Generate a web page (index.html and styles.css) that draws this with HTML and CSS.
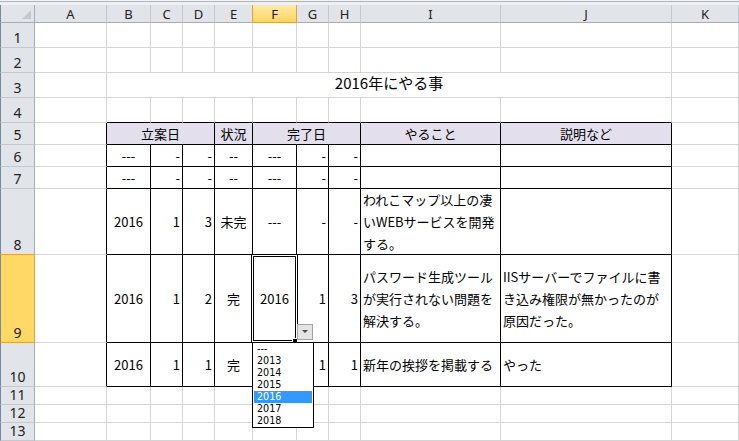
FILE: index.html
```html
<!DOCTYPE html>
<html lang="ja">
<head>
<meta charset="utf-8">
<title>2016年にやる事</title>
<link rel="stylesheet" href="styles.css">
</head>
<body>
<div class="page">
  <div class="strip"></div>
  <div class="sheet">
    <div class="corner"><span class="tri"></span></div>
    <div class="ch">A</div><div class="ch">B</div><div class="ch">C</div><div class="ch">D</div><div class="ch pre">E</div><div class="ch sel">F</div><div class="ch">G</div><div class="ch">H</div><div class="ch">I</div><div class="ch">J</div><div class="ch">K</div>

    <div class="rh">1</div><div class="c"></div><div class="c"></div><div class="c"></div><div class="c"></div><div class="c"></div><div class="c"></div><div class="c"></div><div class="c"></div><div class="c"></div><div class="c"></div><div class="c"></div>
    <div class="rh">2</div><div class="c"></div><div class="c"></div><div class="c"></div><div class="c"></div><div class="c"></div><div class="c"></div><div class="c"></div><div class="c"></div><div class="c"></div><div class="c"></div><div class="c"></div>
    <div class="rh">3</div><div class="c"></div><div class="c title span9">2016年にやる事</div><div class="c"></div>
    <div class="rh">4</div><div class="c"></div><div class="c bb"></div><div class="c bb"></div><div class="c bb"></div><div class="c bb"></div><div class="c bb"></div><div class="c bb"></div><div class="c bb"></div><div class="c bb"></div><div class="c bb"></div><div class="c"></div>

    <div class="rh">5</div><div class="c br"></div>
    <div class="c t hd m span3">立案日</div><div class="c t hd m">状況</div><div class="c t hd m span3">完了日</div><div class="c t hd m">やること</div><div class="c t hd m">説明など</div><div class="c"></div>

    <div class="rh">6</div><div class="c br"></div>
    <div class="c t m">---</div><div class="c t r">-</div><div class="c t r">-</div><div class="c t m">--</div><div class="c t m">---</div><div class="c t r">-</div><div class="c t r">-</div><div class="c t"></div><div class="c t"></div><div class="c"></div>

    <div class="rh">7</div><div class="c br"></div>
    <div class="c t m">---</div><div class="c t r">-</div><div class="c t r">-</div><div class="c t m">--</div><div class="c t m">---</div><div class="c t r">-</div><div class="c t r">-</div><div class="c t"></div><div class="c t"></div><div class="c"></div>

    <div class="rh pre">8</div><div class="c br"></div>
    <div class="c t m">2016</div><div class="c t r">1</div><div class="c t r">3</div><div class="c t m">未完</div><div class="c t m">---</div><div class="c t r">-</div><div class="c t r">-</div><div class="c t l">われこマップ以上の凄<br>いWEBサービスを開発<br>する。</div><div class="c t"></div><div class="c"></div>

    <div class="rh sel">9</div><div class="c br"></div>
    <div class="c t m">2016</div><div class="c t r">1</div><div class="c t r">2</div><div class="c t m">完</div><div class="c t m">2016</div><div class="c t r">1</div><div class="c t r">3</div><div class="c t l">パスワード生成ツール<br>が実行されない問題を<br>解決する。</div><div class="c t l">IISサーバーでファイルに書<br>き込み権限が無かったのが<br>原因だった。</div><div class="c"></div>

    <div class="rh">10</div><div class="c br"></div>
    <div class="c t m">2016</div><div class="c t r">1</div><div class="c t r">1</div><div class="c t m">完</div><div class="c t m"></div><div class="c t r">1</div><div class="c t r">1</div><div class="c t l">新年の挨拶を掲載する</div><div class="c t l">やった</div><div class="c"></div>

    <div class="rh">11</div><div class="c"></div><div class="c"></div><div class="c"></div><div class="c"></div><div class="c"></div><div class="c"></div><div class="c"></div><div class="c"></div><div class="c"></div><div class="c"></div><div class="c"></div>
    <div class="rh">12</div><div class="c"></div><div class="c"></div><div class="c"></div><div class="c"></div><div class="c"></div><div class="c"></div><div class="c"></div><div class="c"></div><div class="c"></div><div class="c"></div><div class="c"></div>
    <div class="rh">13</div><div class="c"></div><div class="c"></div><div class="c"></div><div class="c"></div><div class="c"></div><div class="c"></div><div class="c"></div><div class="c"></div><div class="c"></div><div class="c"></div><div class="c"></div>
  </div>

  <div class="selbox"></div>
  <div class="handle"></div>
  <div class="ddbtn"><svg width="16" height="16" viewBox="0 0 16 16"><polygon points="5,6 11,6 8,9" fill="#4a4a4a"/></svg></div>
  <ul class="ddlist">
    <li>---</li>
    <li>2013</li>
    <li>2014</li>
    <li>2015</li>
    <li class="on">2016</li>
    <li>2017</li>
    <li>2018</li>
  </ul>
</div>
</body>
</html>
```
FILE: styles.css
```css
html, body {
  margin: 0;
  padding: 0;
  background: #fff;
}
body {
  overflow: hidden;
  font-family: "Noto Sans CJK JP", "Noto Sans", sans-serif;
  color: #000;
}
.page {
  position: relative;
  width: 739px;
  height: 441px;
  overflow: hidden;
}
.strip {
  height: 5px;
  background: linear-gradient(#f3f3f3 0 1px, #aab3be 1px 2px, #eef0f3 2px 5px);
}
.sheet {
  display: grid;
  grid-template-columns: 35px 72px 44px 32px 32px 38px 44px 32px 32px 140px 171px 67px;
  grid-template-rows: 18px 25px 25px 25px 25px 22px 22px 22px 66px 88px 44px 18px 18px 18px;
}
.sheet > div {
  box-sizing: border-box;
}
.corner {
  position: relative;
  background: #e1e4e8;
  border-left: 1px solid #7689a1;
  border-right: 1px solid #a3acb8;
  border-bottom: 1px solid #a3acb8;
}
.tri {
  position: absolute;
  right: 3px;
  bottom: 3px;
  width: 0;
  height: 0;
  border-left: 9px solid transparent;
  border-bottom: 9px solid #c3c8ce;
}
.ch {
  display: flex;
  align-items: center;
  justify-content: center;
  padding-top: 2px;
  background: #e1e4e8;
  border-right: 1px solid #c4c9d0;
  border-bottom: 1px solid #a3acb8;
  font-family: "Noto Sans", sans-serif;
  font-size: 13px;
  color: #222;
  line-height: 1;
}
.ch.pre {
  border-right-color: #e0a33e;
}
.ch.sel {
  background: linear-gradient(#fdeaa9, #ffd55c);
  border-right-color: #e0a33e;
  border-bottom-color: #e0a33e;
}
.rh {
  display: flex;
  align-items: flex-end;
  justify-content: center;
  padding-bottom: 2px;
  background: #e1e4e8;
  border-left: 1px solid #7689a1;
  border-right: 1px solid #a3acb8;
  border-bottom: 1px solid #c4c9d0;
  font-family: "Noto Sans", sans-serif;
  font-size: 14px;
  line-height: 1;
  color: #222;
}
.rh.pre {
  border-bottom-color: #e0a33e;
}
.rh.sel {
  background: #ffd866;
  border-right-color: #e0a33e;
  border-bottom-color: #e0a33e;
}
.c {
  display: flex;
  align-items: center;
  border-right: 1px solid #d4d4d4;
  border-bottom: 1px solid #d4d4d4;
  font-size: 13px;
  line-height: 22px;
  white-space: nowrap;
  overflow: hidden;
}
.span3 { grid-column: span 3; }
.span9 { grid-column: span 9; }
.title {
  justify-content: center;
  font-size: 15px;
  line-height: 20px;
  padding-bottom: 5px;
}
.bb { border-bottom-color: #000; }
.br { border-right-color: #000; }
.t {
  border-right-color: #000;
  border-bottom-color: #000;
}
.hd {
  background: #e4dfec;
}
.m { justify-content: center; }
.r { justify-content: flex-end; padding-right: 2px; }
.l { justify-content: flex-start; padding-left: 2px; }

.selbox {
  position: absolute;
  left: 251px;
  top: 254px;
  width: 47px;
  height: 89px;
  box-sizing: border-box;
  border: 1px solid #000;
  box-shadow: inset 0 0 0 1px #fff, inset 0 0 0 2px #000;
}
.handle {
  position: absolute;
  left: 293px;
  top: 339px;
  width: 4px;
  height: 4px;
  background: #000;
  outline: 1px solid #fff;
}
.ddbtn {
  position: absolute;
  left: 297px;
  top: 324px;
  width: 16px;
  height: 16px;
  box-sizing: border-box;
  background: #e4e4e4;
  border: 1px solid #a3a3a3;
}
.ddbtn svg {
  display: block;
  margin: -1px;
}
.ddlist {
  position: absolute;
  left: 252px;
  top: 342px;
  width: 62px;
  height: 86px;
  box-sizing: border-box;
  margin: 0;
  padding: 0 1px;
  list-style: none;
  background: #fff;
  border: 1px solid #000;
  overflow: hidden;
  font-family: "Liberation Sans Narrow", "DejaVu Sans Condensed", "Liberation Sans", sans-serif;
  font-size: 10.7px;
}
.ddlist li {
  height: 12px;
  line-height: 12px;
  padding-left: 3px;
}
.ddlist li.on {
  background: #3399ff;
  color: #fff;
}
```
